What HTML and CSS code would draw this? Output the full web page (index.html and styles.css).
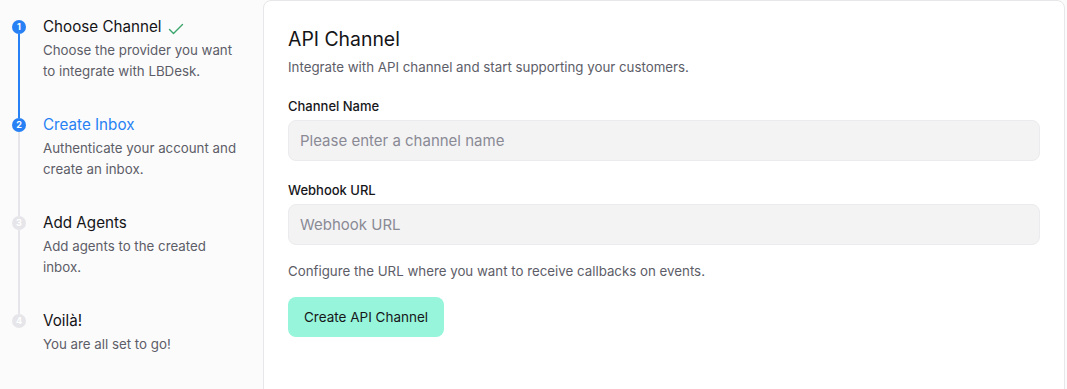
FILE: index.html
```html
<!DOCTYPE html>
<html lang="en">
<head>
<meta charset="utf-8">
<title>API Channel</title>
<link rel="stylesheet" href="styles.css">
</head>
<body>
<div class="page">
  <aside class="sidebar">
    <div class="step done">
      <div class="rail"><span class="dot">1</span><span class="line"></span></div>
      <div class="text">
        <div class="title">Choose Channel
          <svg class="check" width="16" height="12" viewBox="0 0 16 12"><path d="M1.5 6.5 L5.5 10.5 L14.5 1.5" fill="none" stroke="#3aa66c" stroke-width="1.4" stroke-linecap="round" stroke-linejoin="round"/></svg>
        </div>
        <p class="desc">Choose the provider you want to integrate with LBDesk.</p>
      </div>
    </div>
    <div class="step active">
      <div class="rail"><span class="dot">2</span><span class="line"></span></div>
      <div class="text">
        <div class="title">Create Inbox</div>
        <p class="desc">Authenticate your account and create an inbox.</p>
      </div>
    </div>
    <div class="step">
      <div class="rail"><span class="dot">3</span><span class="line"></span></div>
      <div class="text">
        <div class="title">Add Agents</div>
        <p class="desc">Add agents to the created inbox.</p>
      </div>
    </div>
    <div class="step last">
      <div class="rail"><span class="dot">4</span></div>
      <div class="text">
        <div class="title">Voilà!</div>
        <p class="desc">You are all set to go!</p>
      </div>
    </div>
  </aside>
  <main class="card">
    <h1 class="heading">API Channel</h1>
    <p class="sub">Integrate with API channel and start supporting your customers.</p>
    <form class="form">
      <label class="field">
        <span class="label">Channel Name</span>
        <input class="input" type="text" placeholder="Please enter a channel name">
      </label>
      <label class="field">
        <span class="label">Webhook URL</span>
        <input class="input" type="text" placeholder="Webhook URL">
      </label>
      <p class="help">Configure the URL where you want to receive callbacks on events.</p>
      <button class="btn" type="button">Create API Channel</button>
    </form>
  </main>
</div>
</body>
</html>
```
FILE: styles.css
```css
* { box-sizing: border-box; }
html, body { margin: 0; padding: 0; }
body {
  font-family: Inter, "Noto Sans", sans-serif;
  background: #fbfbfb;
  color: #1b1b1f;
  height: 389px;
  overflow: hidden;
}
.page {
  display: flex;
  align-items: flex-start;
  height: 100%;
}
.sidebar {
  width: 263px;
  flex: none;
  padding: 20px 12px 0 12px;
  display: flex;
  flex-direction: column;
}
.step {
  display: flex;
  gap: 17px;
}
.rail {
  width: 14px;
  flex: none;
  display: flex;
  flex-direction: column;
  align-items: center;
}
.dot {
  width: 14px;
  height: 14px;
  border-radius: 50%;
  background: #e6e6ea;
  color: #fff;
  font-size: 9px;
  font-weight: 700;
  line-height: 14px;
  text-align: center;
  flex: none;
}
.line {
  width: 2px;
  flex: 1;
  background: #e5e5ea;
}
.step.done .dot,
.step.active .dot { background: #2781f4; }
.step.done .line { background: #2781f4; }
.text {
  margin-top: -5px;
  padding-bottom: 36px;
}
.title {
  font-size: 15.2px;
  font-weight: 400;
  line-height: 24px;
  color: #141418;
  display: flex;
  align-items: center;
  gap: 6px;
}
.step.active .title { color: #2781f4; }
.check { margin-top: 3px; }
.desc {
  margin: 1px 0 0;
  font-size: 13.3px;
  line-height: 21px;
  color: #5d5d68;
  width: 200px;
}
.card {
  flex: 1;
  margin-right: 2px;
  height: 420px;
  background: #fff;
  border: 1px solid #e7e7ea;
  border-radius: 8px;
  padding: 24px 24px 24px 24px;
}
.heading {
  margin: 0;
  font-size: 19.4px;
  font-weight: 400;
  line-height: 28px;
  color: #141418;
}
.sub {
  margin: 4px 0 0;
  font-size: 13.3px;
  line-height: 20px;
  color: #5d5d68;
}
.form {
  margin-top: 19px;
  display: flex;
  flex-direction: column;
}
.field {
  display: flex;
  flex-direction: column;
  gap: 4px;
  margin-bottom: 19px;
}
.label {
  font-size: 13px;
  font-weight: 500;
  line-height: 20px;
  color: #17171b;
}
.input {
  height: 41px;
  border: 1px solid #ebebee;
  background: #f3f3f4;
  border-radius: 8px;
  padding: 0 11px;
  font-family: inherit;
  font-size: 15px;
  color: #17171b;
  outline: none;
}
.input::placeholder { color: #8a8a94; }
.help {
  margin: -3px 0 0;
  font-size: 13.3px;
  line-height: 20px;
  color: #5d5d68;
}
.btn {
  margin-top: 16px;
  align-self: flex-start;
  height: 40px;
  padding: 0 16px;
  border: none;
  border-radius: 8px;
  background: #96f5da;
  color: #17171b;
  font-family: inherit;
  font-size: 13.5px;
  font-weight: 400;
}
```
